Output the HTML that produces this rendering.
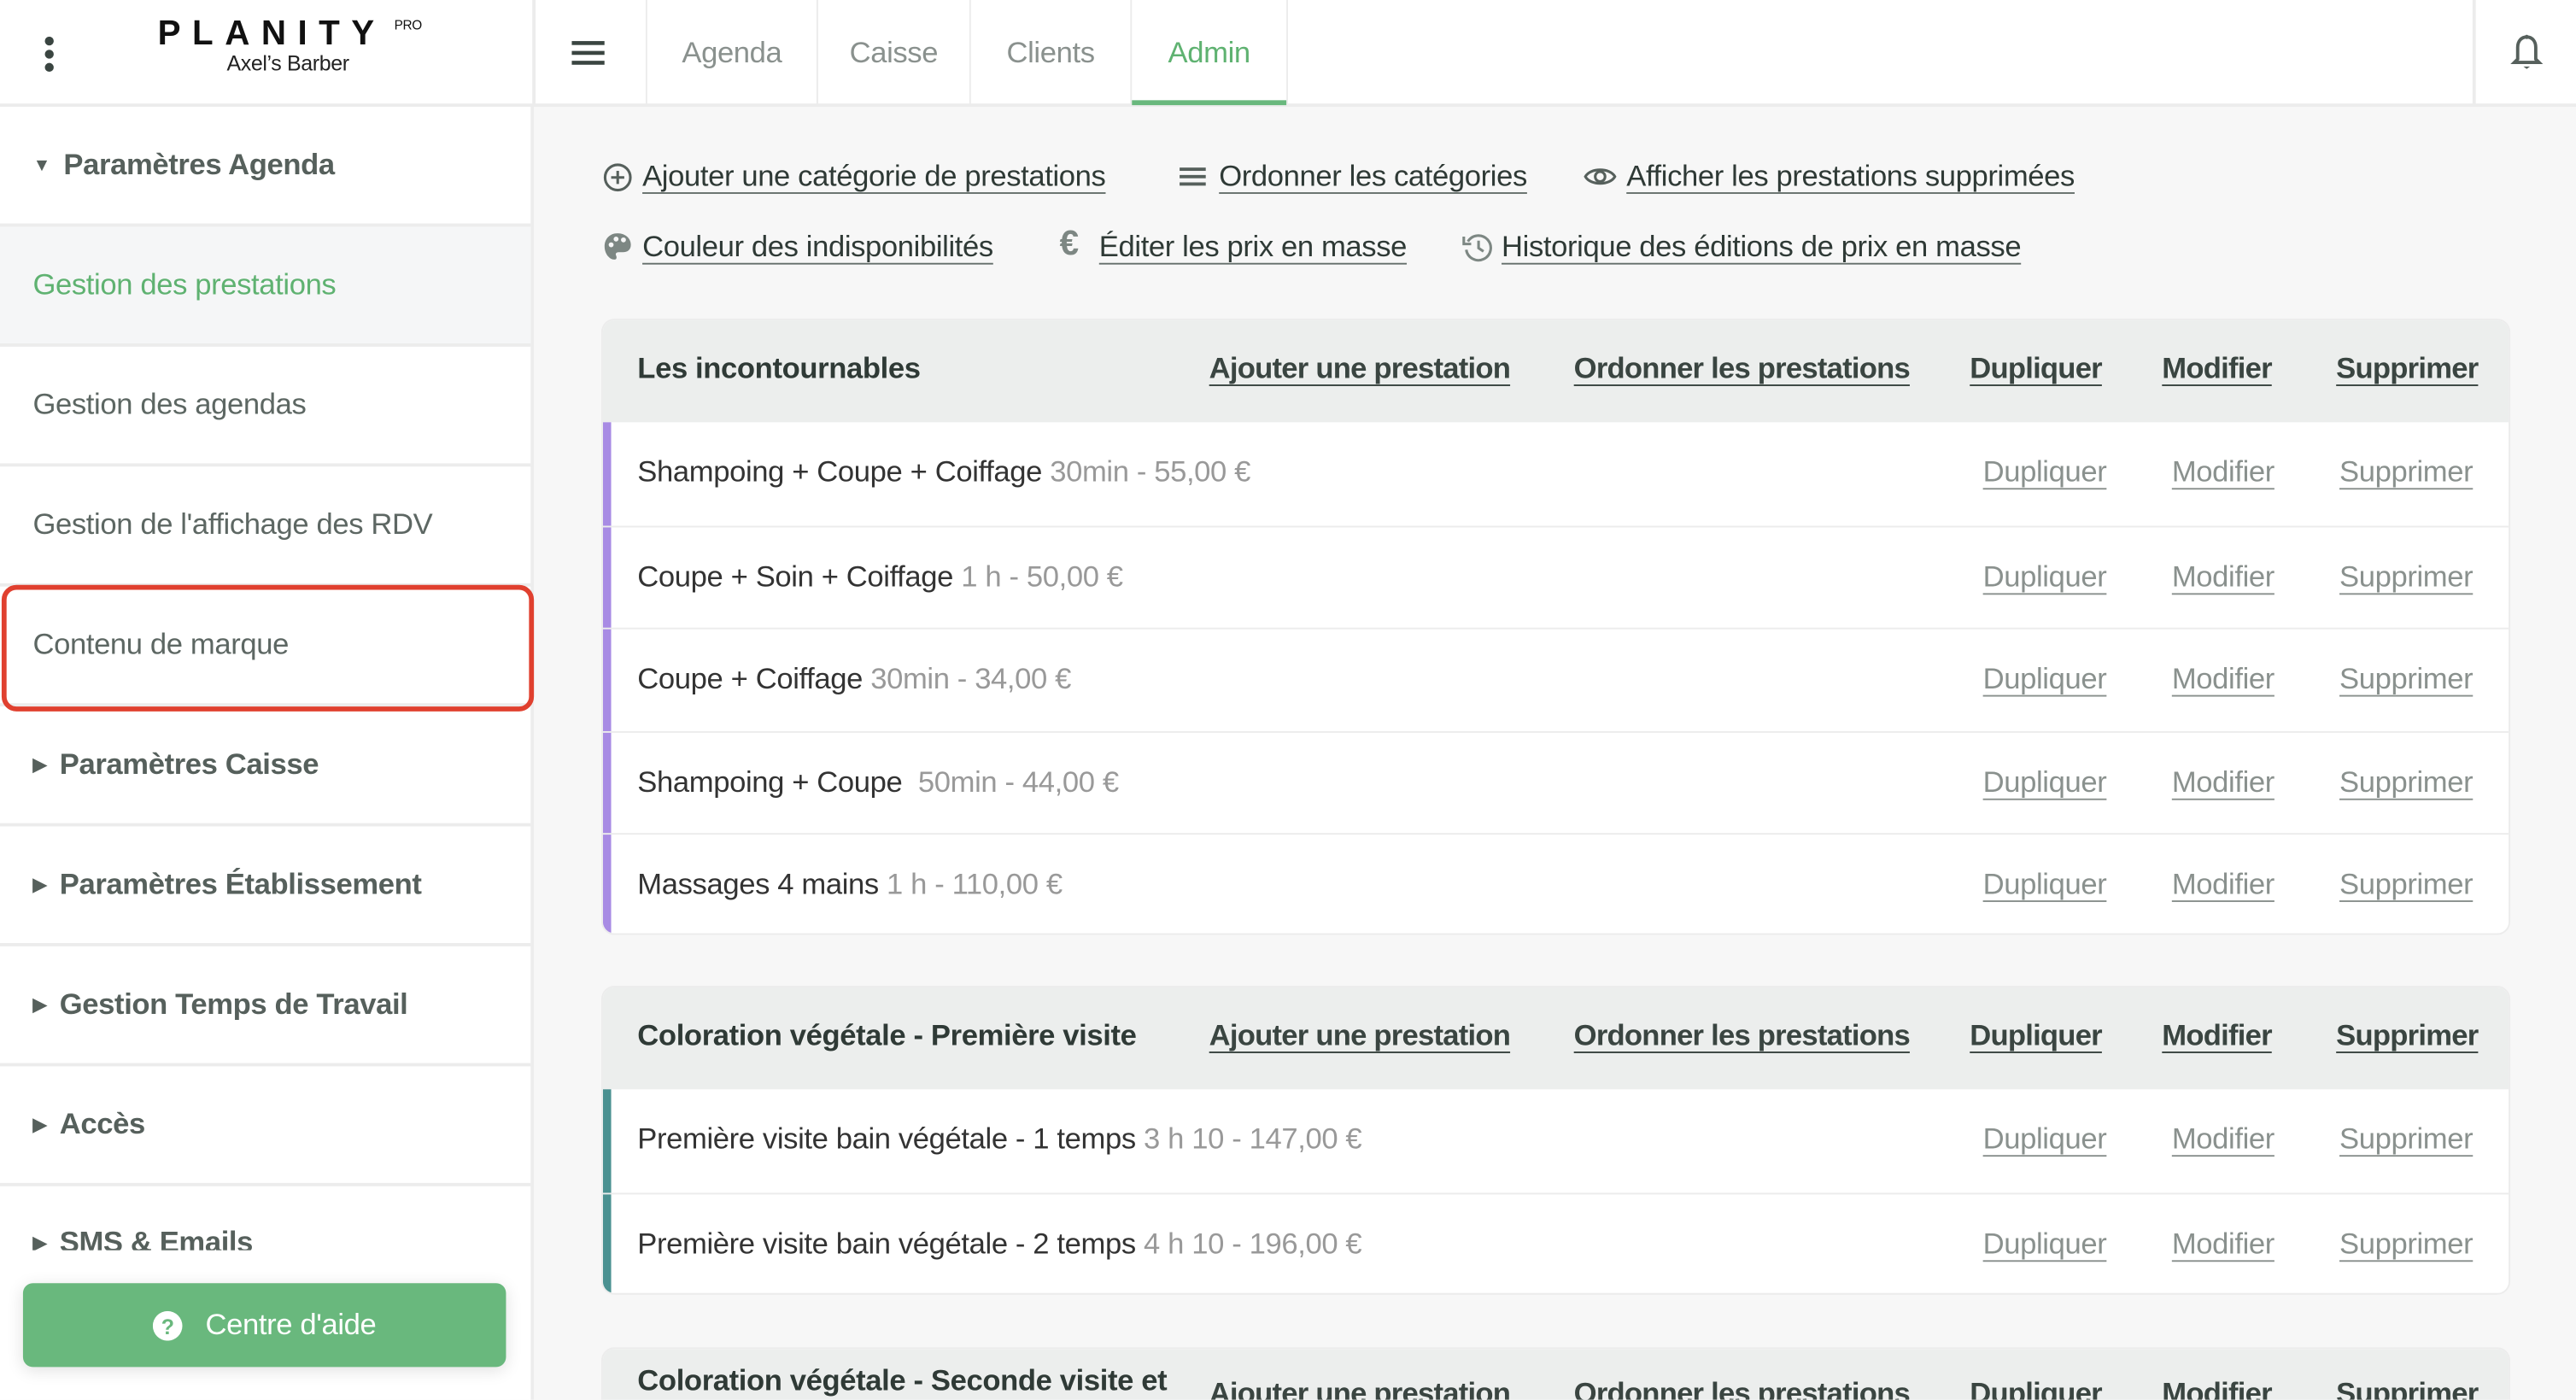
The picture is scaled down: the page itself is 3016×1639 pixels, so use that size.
<!DOCTYPE html>
<html><head><meta charset="utf-8">
<style>
*{box-sizing:border-box;margin:0;padding:0}
html,body{width:3016px;height:1638px;overflow:hidden;background:#f7f7f7}
#w{position:absolute;left:0;top:0;width:1568px;height:852px;transform:scale(1.92347);transform-origin:0 0;font-family:"Liberation Sans",sans-serif;color:#3a4541;background:#f7f7f7;overflow:hidden;letter-spacing:-0.2px}
.a{position:absolute}
#hdr{left:0;top:0;width:1568px;height:65px;background:#fff;border-bottom:2px solid #ececec}
#side{left:0;top:65px;width:325px;height:787px;background:#fff;border-right:2px solid #ececec}
.si{position:absolute;left:0;width:323px;height:73px;border-bottom:2px solid #ececec;font-size:18px;display:flex;align-items:center;padding-left:20px;color:#5d6763}
.sh{font-weight:bold;color:#56605c}
.tab{position:absolute;top:0;height:64px;display:flex;align-items:center;justify-content:center;font-size:18px;color:#8a918e;border-left:1.5px solid #ececec}
.lk{position:absolute;font-size:18px;color:#2f3a36;text-decoration:underline;text-underline-offset:4px;text-decoration-color:#67716d;white-space:nowrap}
.card{position:absolute;left:366px;width:1162px;background:#fff;border-radius:8px;overflow:hidden;border:1px solid #ececec}
.ch{height:62px;background:#eceeed;position:relative;font-size:18px}
.ch .t{position:absolute;left:21px;top:19px;font-weight:bold;color:#2f3a36}
.ha{position:absolute;top:19px;font-weight:bold;color:#3a4541;text-decoration:underline;text-underline-offset:4px;white-space:nowrap;letter-spacing:-0.4px}
.row{height:62.5px;position:relative;border-top:1.5px solid #ececec;font-size:18px}
.row .n{position:absolute;left:21px;top:20px;color:#333;white-space:nowrap}
.row .n span{color:#999}
.row .x{position:absolute;top:20px;color:#8a918e;text-decoration:underline;text-underline-offset:4px}
.bar{position:absolute;left:0;top:62px;bottom:0;width:5px}
</style></head><body><div id="w">
<div id="hdr" class="a">
 <svg class="a" style="left:26px;top:21px" width="8" height="24"><circle cx="4" cy="4" r="2.7" fill="#3a4541"/><circle cx="4" cy="12" r="2.7" fill="#3a4541"/><circle cx="4" cy="20" r="2.7" fill="#3a4541"/></svg>
 <div class="a" style="left:96px;top:9px;font-size:21px;font-weight:bold;letter-spacing:7px;color:#111">PLANITY</div>
 <div class="a" style="left:240px;top:11px;font-size:8px;color:#111">PRO</div>
 <div class="a" style="left:138px;top:31px;font-size:13px;color:#222">Axel’s Barber</div>
 <div class="a" style="left:324px;top:0;width:2px;height:64px;background:#ececec"></div>
 <svg class="a" style="left:348px;top:24px" width="20" height="16"><rect y="1" width="20" height="2.4" fill="#3a4541"/><rect y="7" width="20" height="2.4" fill="#3a4541"/><rect y="13" width="20" height="2.4" fill="#3a4541"/></svg>
 <div class="tab" style="left:393px;width:104px">Agenda</div>
 <div class="tab" style="left:497px;width:93px">Caisse</div>
 <div class="tab" style="left:590px;width:98px">Clients</div>
 <div class="tab" style="left:688px;width:96px;color:#5fb271;border-right:1.5px solid #ececec">Admin</div>
 <div class="a" style="left:689px;top:61px;width:94px;height:3px;background:#69b87d"></div>
 <div class="a" style="left:1505px;top:0;width:1.5px;height:64px;background:#ececec"></div>
 <svg class="a" style="left:1528px;top:20px" width="20" height="24" viewBox="0 0 20 24"><path d="M10 2.5c-3.5 0-5.5 2.8-5.5 6.3V16L2.5 18h15l-2-2V8.8c0-3.5-2-6.3-5.5-6.3z" fill="none" stroke="#56605c" stroke-width="2"/><circle cx="10" cy="2.5" r="1.3" fill="#56605c"/><path d="M8 20.5h4l-2 1.5z" fill="#56605c"/></svg>
</div>
<div id="side" class="a">
 <div class="si sh" style="top:0"><span style="font-size:11px;margin-right:8px">▼</span>Paramètres Agenda</div>
 <div class="si" style="top:73px;background:#f5f6f7;color:#5fb271">Gestion des prestations</div>
 <div class="si" style="top:146px">Gestion des agendas</div>
 <div class="si" style="top:219px">Gestion de l'affichage des RDV</div>
 <div class="si" style="top:292px">Contenu de marque</div>
 <div class="a" style="left:1px;top:291px;width:324px;height:77px;border:3px solid #e0402f;border-radius:9px"></div>
 <div class="si sh" style="top:365px"><span style="font-size:11px;margin-right:8px">▶</span>Paramètres Caisse</div>
 <div class="si sh" style="top:438px"><span style="font-size:11px;margin-right:8px">▶</span>Paramètres Établissement</div>
 <div class="si sh" style="top:511px"><span style="font-size:11px;margin-right:8px">▶</span>Gestion Temps de Travail</div>
 <div class="si sh" style="top:584px"><span style="font-size:11px;margin-right:8px">▶</span>Accès</div>
 <div class="si sh" style="top:657px;border:none;align-items:flex-start;padding-top:24px;height:39px;overflow:hidden"><span style="font-size:11px;margin-right:8px;margin-top:4px">▶</span>SMS &amp; Emails</div>
 <div class="a" style="left:0;top:696px;width:323px;height:91px;background:linear-gradient(rgba(255,255,255,0.6),#fff 20%)"></div>
 <div class="a" style="left:14px;top:716px;width:294px;height:51px;background:#69b87d;border-radius:6px;box-shadow:0 2px 10px rgba(0,0,0,0.12);color:#fff;font-size:18px;display:flex;align-items:center;justify-content:center">
  <svg width="18" height="18" style="margin-right:14px"><circle cx="9" cy="9" r="9" fill="#fff"/><text x="9" y="14" text-anchor="middle" font-size="13" font-weight="bold" fill="#69b87d" font-family="Liberation Sans">?</text></svg>Centre d'aide</div>
</div>
<!-- top links -->
<svg class="a" style="left:367px;top:99px" width="18" height="18"><circle cx="9" cy="9" r="7.7" fill="none" stroke="#56605c" stroke-width="1.6"/><path d="M9 5v8M5 9h8" stroke="#56605c" stroke-width="1.6"/></svg>
<div class="lk" style="left:391px;top:97px">Ajouter une catégorie de prestations</div>
<svg class="a" style="left:718px;top:101px" width="16" height="13"><rect y="1" width="16" height="2" fill="#56605c"/><rect y="5.5" width="16" height="2" fill="#56605c"/><rect y="10" width="16" height="2" fill="#56605c"/></svg>
<div class="lk" style="left:742px;top:97px">Ordonner les catégories</div>
<svg class="a" style="left:964px;top:100px" width="20" height="15"><path d="M1 7.5C4 2 16 2 19 7.5 16 13 4 13 1 7.5z" fill="none" stroke="#56605c" stroke-width="1.6"/><circle cx="10" cy="7.5" r="3" fill="none" stroke="#56605c" stroke-width="1.6"/></svg>
<div class="lk" style="left:990px;top:97px">Afficher les prestations supprimées</div>
<svg class="a" style="left:367px;top:141px" width="18" height="18"><path d="M9 1C4 1 1 4.5 1 9s3 8 6 8c1.5 0 1.5-1.5 1-2.5s0-2 1.5-2H12c3 0 5-1.5 5-4.5C17 4 13.5 1 9 1z" fill="#7d8783"/><circle cx="5" cy="8" r="1.5" fill="#f7f7f7"/><circle cx="8" cy="4.5" r="1.5" fill="#f7f7f7"/><circle cx="12.5" cy="5" r="1.5" fill="#f7f7f7"/></svg>
<div class="lk" style="left:391px;top:140px">Couleur des indisponibilités</div>
<div class="a" style="left:645px;top:137px;font-size:21px;font-weight:bold;color:#7d8783">€</div>
<div class="lk" style="left:669px;top:140px">Éditer les prix en masse</div>
<svg class="a" style="left:890px;top:141px" width="19" height="19"><path d="M3.5 6A7.5 7.5 0 1 1 2.5 11" fill="none" stroke="#7d8783" stroke-width="1.6"/><path d="M1 3v4.5h4.5" fill="none" stroke="#7d8783" stroke-width="1.6"/><path d="M10 5.5v4.5l3 2" fill="none" stroke="#7d8783" stroke-width="1.6"/></svg>
<div class="lk" style="left:914px;top:140px">Historique des éditions de prix en masse</div>

<!-- card 1 -->
<div class="card" style="top:194px;height:375px">
 <div class="ch"><div class="t">Les incontournables</div>
  <div class="ha" style="left:369px">Ajouter une prestation</div><div class="ha" style="left:591px">Ordonner les prestations</div><div class="ha" style="left:832px">Dupliquer</div><div class="ha" style="left:949px">Modifier</div><div class="ha" style="left:1055px">Supprimer</div></div>
 <div class="bar" style="background:#a88be4"></div>
 <div class="row" style="border-top:none"><div class="n">Shampoing + Coupe + Coiffage <span>30min - 55,00 €</span></div><div class="x" style="left:840px">Dupliquer</div><div class="x" style="left:955px">Modifier</div><div class="x" style="left:1057px">Supprimer</div></div>
 <div class="row"><div class="n">Coupe + Soin + Coiffage <span>1 h - 50,00 €</span></div><div class="x" style="left:840px">Dupliquer</div><div class="x" style="left:955px">Modifier</div><div class="x" style="left:1057px">Supprimer</div></div>
 <div class="row"><div class="n">Coupe + Coiffage <span>30min - 34,00 €</span></div><div class="x" style="left:840px">Dupliquer</div><div class="x" style="left:955px">Modifier</div><div class="x" style="left:1057px">Supprimer</div></div>
 <div class="row"><div class="n">Shampoing + Coupe &nbsp;<span>50min - 44,00 €</span></div><div class="x" style="left:840px">Dupliquer</div><div class="x" style="left:955px">Modifier</div><div class="x" style="left:1057px">Supprimer</div></div>
 <div class="row"><div class="n">Massages 4 mains <span>1 h - 110,00 €</span></div><div class="x" style="left:840px">Dupliquer</div><div class="x" style="left:955px">Modifier</div><div class="x" style="left:1057px">Supprimer</div></div>
</div>
<!-- card 2 -->
<div class="card" style="top:600px;height:188px">
 <div class="ch"><div class="t">Coloration végétale - Première visite</div>
  <div class="ha" style="left:369px">Ajouter une prestation</div><div class="ha" style="left:591px">Ordonner les prestations</div><div class="ha" style="left:832px">Dupliquer</div><div class="ha" style="left:949px">Modifier</div><div class="ha" style="left:1055px">Supprimer</div></div>
 <div class="bar" style="background:#4a9191"></div>
 <div class="row" style="border-top:none"><div class="n">Première visite bain végétale - 1 temps <span>3 h 10 - 147,00 €</span></div><div class="x" style="left:840px">Dupliquer</div><div class="x" style="left:955px">Modifier</div><div class="x" style="left:1057px">Supprimer</div></div>
 <div class="row"><div class="n">Première visite bain végétale - 2 temps <span>4 h 10 - 196,00 €</span></div><div class="x" style="left:840px">Dupliquer</div><div class="x" style="left:955px">Modifier</div><div class="x" style="left:1057px">Supprimer</div></div>
</div>
<!-- card 3 -->
<div class="card" style="top:820px;height:32px;border-bottom:none;border-radius:8px 8px 0 0">
 <div class="ch" style="height:32px;overflow:hidden"><div class="t" style="top:9px">Coloration végétale - Seconde visite et</div>
  <div class="ha" style="left:369px;top:17px">Ajouter une prestation</div><div class="ha" style="left:591px;top:17px">Ordonner les prestations</div><div class="ha" style="left:832px;top:17px">Dupliquer</div><div class="ha" style="left:949px;top:17px">Modifier</div><div class="ha" style="left:1055px;top:17px">Supprimer</div></div>
</div>
</div></body></html>
